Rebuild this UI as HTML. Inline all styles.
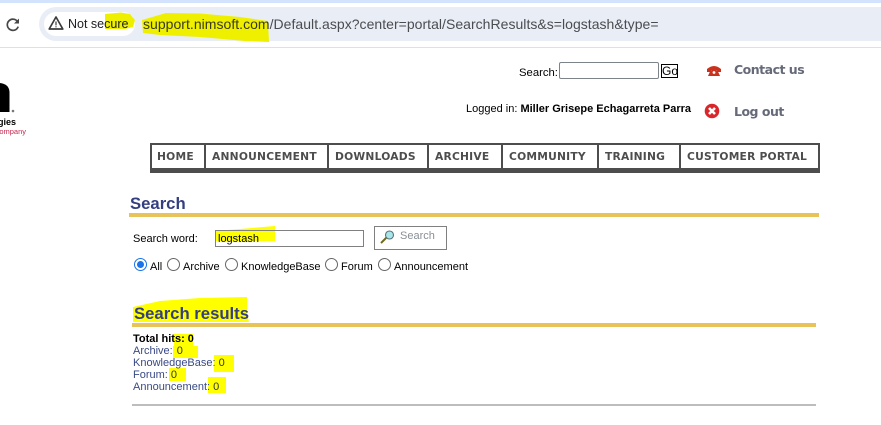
<!DOCTYPE html>
<html><head><meta charset="utf-8"><title>Search</title>
<style>
html,body{margin:0;padding:0;background:#fff;width:881px;height:425px;overflow:hidden}
body{position:relative;font-family:"Liberation Sans",Arial,sans-serif;font-size:12px;color:#000}
.a{position:absolute;white-space:nowrap;line-height:14px}
.box{position:absolute;box-sizing:border-box}
.nav{position:absolute;top:143px;height:25px;box-sizing:border-box;border:2px solid #4d4d4d;border-bottom:0;border-right:0;background:#fff;font:bold 10.7px/24px "DejaVu Sans",sans-serif;color:#4d4d4d;text-align:left;padding-left:6px;white-space:nowrap;letter-spacing:.22px}
.h{font-weight:bold;font-size:16.7px;color:#333f7f;line-height:20px}
.lnk{color:#3a4a85}
.radio{position:absolute;width:11px;height:11px;border:1px solid #666;border-radius:50%;background:#fff}
svg{position:absolute}
</style></head><body>
<div class="box" style="left:0;top:0;width:881px;height:3px;background:#d3e3fd"></div>
<div class="box" style="left:39px;top:7px;width:842px;height:34px;background:#e9edf6;border-radius:17px 0 0 17px"></div>
<div class="box" style="left:44px;top:12px;width:91px;height:24px;background:#fff;border-radius:12px"></div>
<div class="box" style="left:0;top:47px;width:881px;height:1px;background:#e0e0e0"></div>
<svg style="left:0;top:0" width="881" height="425">
<path d="M18.200 26.600 A5.600 5.600 0 1 1 17.600 21.700" fill="none" stroke="#474747" stroke-width="1.700"/>
<path d="M19 18.500 V23.500 H14 Z" fill="#474747"/>
<path d="M56 17 L62.800 29 H49.200 Z" fill="none" stroke="#3c3c3c" stroke-width="1.700" stroke-linejoin="round"/>
<path d="M56 21.500 V25.400 M56 26.200 V27.400" stroke="#3c3c3c" stroke-width="1.200"/>
<path d="M105 14 L121 12.500 L130 14 L135 20 L133 27 L125 29 L105 29 Z" fill="#eef000"/>
<path d="M142 20 L166 13 L200 13.500 L240 17 L268 21 L269 42 L245 41 L200 37 L160 35 L143 33 Z" fill="#eef000"/>
<path d="M216 231 L275 226 L275 241 L216 241 Z" fill="#ffff00"/>
<path d="M133 307 L160 301 L200 298 L247 297 L247 313 L249 322 L133 322 Z" fill="#ffff00"/>
<path d="M174 334 H193 V346 H198 V358 H173 V346 H174 Z" fill="#ffff00"/>
<path d="M214 355 H234 V372 H214 Z" fill="#ffff00"/>
<path d="M169 368 H186 V381 H169 Z" fill="#ffff00"/>
<path d="M208 377 H226 V393 H208 Z" fill="#ffff00"/>
<!-- phone -->
<path d="M707 69 Q714 63 721 69 V72 H717 V70 H711 V72 H707 Z" fill="#c8321e"/>
<path d="M710 71.500 L712 69.500 H716 L718 71.500 L720 76 H708 Z" fill="#c8321e"/>
<circle cx="714" cy="72.500" r="1.400" fill="#fff"/>
<!-- log out -->
<circle cx="712" cy="111" r="7.300" fill="#d8262a"/>
<path d="M709 108 L715 114 M715 108 L709 114" stroke="#fff" stroke-width="2.600"/>
<!-- magnifier -->
<path d="M381 243 L387 237" stroke="#6f6a1e" stroke-width="2"/>
<circle cx="389.500" cy="235" r="4" fill="#a9e6ea" stroke="#55727a" stroke-width="1.100"/>
<!-- logo fragment -->
<path d="M0 83 Q9 84 9.500 92 V112 H0 Z" fill="#000"/>
<circle cx="13" cy="111" r="1.300" fill="#777"/>
</svg>
<div class="a" style="left:0;top:115px;width:16px;overflow:hidden;direction:rtl;font-weight:bold;font-size:9px">gies</div>
<div class="a" style="left:0;top:125px;width:26px;overflow:hidden;direction:rtl;font-size:7.500px;color:#c4284f">company</div>

<div class="a" style="left:68px;top:17px;font-size:12.500px;color:#202124">Not secure</div>
<div class="a" style="left:143px;top:17px;font-size:14px;color:#4b4c50;letter-spacing:.03px"><span style="color:#3a3a1a">support.nimsoft.com</span>/Default.aspx?center=portal/SearchResults&amp;s=logstash&amp;type=</div>

<div class="a" style="left:519px;top:66px;font-size:11.300px">Search:</div>
<div class="box" style="left:559px;top:62px;width:100px;height:17px;border:1px solid #7d8489;border-radius:2px;background:#fff"></div>
<div class="box" style="left:661px;top:64px;width:17px;height:14px;border:1px solid #000;font-size:12px;line-height:12px;text-align:center">Go</div>
<div class="a" style="left:734px;top:62px;font:bold 12.500px/16px 'DejaVu Sans',sans-serif;color:#666a78;letter-spacing:-.5px">Contact us</div>
<div class="a" style="left:466px;top:102px;font-size:11px;letter-spacing:0">Logged in: <b style="font-weight:bold">Miller Grisepe Echagarreta Parra</b></div>
<div class="a" style="left:734px;top:104px;font:bold 12.500px/16px 'DejaVu Sans',sans-serif;color:#666a78;letter-spacing:-.5px">Log out</div>

<div class="nav" style="left:150px;width:54px;padding-left:5px">HOME</div>
<div class="nav" style="left:204px;width:123px">ANNOUNCEMENT</div>
<div class="nav" style="left:327px;width:100px">DOWNLOADS</div>
<div class="nav" style="left:427px;width:74px">ARCHIVE</div>
<div class="nav" style="left:501px;width:97px">COMMUNITY</div>
<div class="nav" style="left:597px;width:83px">TRAINING</div>
<div class="nav" style="left:679px;width:141px;border-right:2px solid #4d4d4d">CUSTOMER PORTAL</div>
<div class="box" style="left:150px;top:168px;width:670px;height:5px;background:#4d4d4d"></div>

<div class="a h" style="left:130px;top:194px">Search</div>
<div class="box" style="left:129px;top:213px;width:690px;height:4px;background:#e8c35a"></div>
<div class="a" style="left:133px;top:232px;font-size:11px">Search word:</div>
<div class="box" style="left:215px;top:230px;width:149px;height:17px;border:1px solid #808080"></div>
<div class="a" style="left:218px;top:232px;font-size:11px">logstash</div>
<div class="box" style="left:374px;top:226px;width:73px;height:24px;border:1px solid #808080"></div>
<div class="a" style="left:400px;top:229px;font-size:11px;color:#8a8f96">Search</div>

<div class="radio" style="left:134px;top:258px;border-color:#1a73e8"></div>
<div class="box" style="left:137px;top:261px;width:7px;height:7px;border-radius:50%;background:#1a73e8"></div>
<div class="a" style="left:150px;top:260px;font-size:11px">All</div>
<div class="radio" style="left:167px;top:258px"></div>
<div class="a" style="left:183px;top:260px;font-size:11px">Archive</div>
<div class="radio" style="left:225px;top:258px"></div>
<div class="a" style="left:241px;top:260px;font-size:11px">KnowledgeBase</div>
<div class="radio" style="left:325px;top:258px"></div>
<div class="a" style="left:341px;top:260px;font-size:11px">Forum</div>
<div class="radio" style="left:378px;top:258px"></div>
<div class="a" style="left:394px;top:260px;font-size:11px">Announcement</div>

<div class="a h" style="left:134px;top:304px">Search results</div>
<div class="box" style="left:132px;top:323px;width:684px;height:4px;background:#e8c35a"></div>
<div class="a" style="left:133px;top:332px;font-size:11px;font-weight:bold">Total hits: 0</div>
<div class="a lnk" style="left:133px;top:344px;font-size:11px">Archive: <span style="color:#333;margin-left:1px">0</span></div>
<div class="a lnk" style="left:133px;top:356px;font-size:11px">KnowledgeBase: <span style="color:#333">0</span></div>
<div class="a lnk" style="left:133px;top:368px;font-size:11px">Forum: <span style="color:#333">0</span></div>
<div class="a lnk" style="left:133px;top:380px;font-size:11px">Announcement: <span style="color:#333">0</span></div>
<div class="box" style="left:132px;top:404px;width:684px;height:2px;background:#bdbdbd"></div>
</body></html>
